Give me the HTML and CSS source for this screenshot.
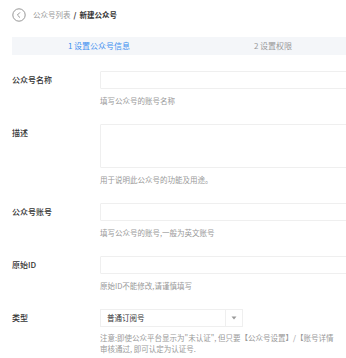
FILE: index.html
```html
<!DOCTYPE html>
<html lang="zh">
<head>
<meta charset="utf-8">
<link rel="stylesheet" href="styles.css">
</head>
<body>
<div class="page">
  <div class="crumbs">
    <svg class="back" width="14" height="14" viewBox="0 0 14 14"><circle cx="7" cy="7" r="6.2" fill="none" stroke="#8a8a8a" stroke-width="0.9"/><path d="M8 4.4 L5.4 7 L8 9.6" fill="none" stroke="#8a8a8a" stroke-width="0.9"/></svg>
    <span class="crumb-link">公众号列表</span>
    <span class="crumb-sep">/</span>
    <span class="crumb-cur">新建公众号</span>
  </div>

  <div class="steps">
    <div class="step active">1 设置公众号信息</div>
    <div class="step">2 设置权限</div>
  </div>

  <div class="form">
    <div class="item">
      <div class="label">公众号名称</div>
      <div class="ctrl">
        <div class="input"></div>
        <div class="hint">填写公众号的账号名称</div>
      </div>
    </div>
    <div class="item">
      <div class="label">描述</div>
      <div class="ctrl">
        <div class="input textarea"></div>
        <div class="hint">用于说明此公众号的功能及用途。</div>
      </div>
    </div>
    <div class="item">
      <div class="label">公众号账号</div>
      <div class="ctrl">
        <div class="input"></div>
        <div class="hint">填写公众号的账号,一般为英文账号</div>
      </div>
    </div>
    <div class="item">
      <div class="label">原始ID</div>
      <div class="ctrl">
        <div class="input"></div>
        <div class="hint">原始ID不能修改,请谨慎填写</div>
      </div>
    </div>
    <div class="item">
      <div class="label">类型</div>
      <div class="ctrl">
        <div class="select">
          <span class="sel-text">普通订阅号</span>
          <span class="sel-arrow"><svg width="6" height="4" viewBox="0 0 6 4"><path d="M0.5 0.5 L5.5 0.5 L3 3.5 Z" fill="#999"/></svg></span>
        </div>
        <div class="hint multi">
          <div class="hint-line">注意:即使公众平台显示为"未认证", 但只要【公众号设置】/【账号详情</div>
          <div class="hint-line">审核通过, 即可认定为认证号.</div>
        </div>
      </div>
    </div>
  </div>
</div>
</body>
</html>
```

FILE: styles.css
```css
html, body {
  margin: 0;
  padding: 0;
  overflow: hidden;
  background: #fff;
}
body {
  font-family: "Noto Sans CJK SC", "Noto Sans", sans-serif;
  color: #333;
}
.page {
  width: 348px;
  padding: 0 12px;
}
.crumbs {
  display: flex;
  align-items: center;
  height: 14px;
  margin-top: 8px;
  font-size: 7.5px;
  line-height: 14px;
  white-space: nowrap;
}
.back {
  display: block;
  margin-right: 7px;
  flex: none;
}
.crumb-link {
  color: #999;
}
.crumb-sep {
  color: #333;
  font-weight: 700;
  margin: 0 3px;
}
.crumb-cur {
  color: #333;
  font-weight: 700;
}
.steps {
  display: flex;
  margin-top: 15px;
  background: #f4f6f9;
  height: 18px;
}
.step {
  flex: 1;
  text-align: center;
  font-size: 8px;
  line-height: 18px;
  color: #999;
  white-space: nowrap;
}
.step.active {
  color: #3d8ef0;
}
.form {
  margin-top: 16px;
}
.item {
  display: grid;
  grid-template-columns: 88px 1fr;
  margin-bottom: 18px;
}
.label {
  font-size: 8px;
  line-height: 18px;
  color: #333;
  font-weight: 500;
  white-space: nowrap;
}
.input {
  height: 18px;
  box-sizing: border-box;
  border: 1px solid #efefef;
  border-radius: 1px;
}
.input.textarea {
  height: 44px;
}
.hint {
  margin-top: 7px;
  font-size: 7.5px;
  line-height: 10px;
  color: #999;
  white-space: nowrap;
}
.hint.multi {
  margin-top: 5px;
  line-height: 11px;
  width: 246px;
}
.hint-line {
  white-space: nowrap;
  overflow: hidden;
}
.select {
  width: 143px;
  height: 18px;
  box-sizing: border-box;
  border: 1px solid #efefef;
  display: flex;
  align-items: center;
}
.sel-text {
  flex: 1;
  padding-left: 6px;
  font-size: 7.5px;
  color: #333;
  line-height: 16px;
}
.sel-arrow {
  width: 16px;
  height: 16px;
  border-left: 1px solid #efefef;
  display: flex;
  align-items: center;
  justify-content: center;
}
.sel-arrow svg {
  display: block;
}
```
